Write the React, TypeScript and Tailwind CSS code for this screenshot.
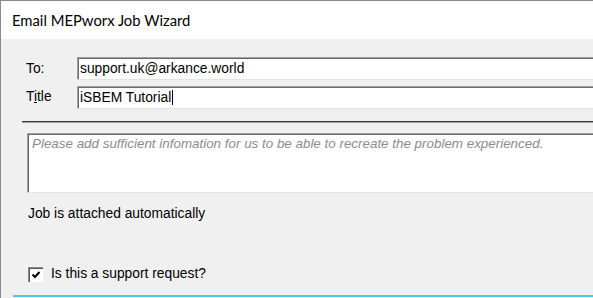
export default function App() {
  return (
    <div className="h-[298px] w-[593px] overflow-hidden bg-[#f0f0f0] font-['Liberation_Sans',Arial,sans-serif] text-[13.8px] text-black">
      <div className="h-full border-l border-t border-[#8a8a8a]">
        {/* title bar */}
        <div className="flex h-[38px] items-center bg-white pl-[11px] font-['Lato','Noto_Sans',sans-serif] text-[14.8px] text-black">
          Email MEPworx Job Wizard
        </div>

        <div className="pt-[18px]">
          <div className="flex flex-col gap-[6px] pl-[25px]">
            <div className="flex h-[23px]">
              <div className="w-[51px] shrink-0 pt-[4px] leading-[15px]">To:</div>
              <SunkenBox className="h-[23px] w-[540px]">
                <span className="pl-[1px] leading-[19px]">support.uk@arkance.world</span>
              </SunkenBox>
            </div>
            <div className="flex h-[23px]">
              <div className="w-[51px] shrink-0 pt-[3px] leading-[15px]">
                T<span className="underline">i</span>tle
              </div>
              <SunkenBox className="h-[23px] w-[540px]">
                <span className="flex items-center pl-[1px] leading-[19px]">
                  iSBEM Tutorial
                  <span className="ml-[1px] inline-block h-[15px] w-[1px] bg-black" />
                </span>
              </SunkenBox>
            </div>
          </div>

          {/* etched separator */}
          <div className="ml-[21px] mt-[12px] h-[2px] border-b border-t border-b-[#a0a0a0] border-t-[#3c3c3c]" />

          <div className="ml-[26px] mt-[10px]">
            <SunkenBox className="h-[60px] w-[580px]">
              <div className="pl-[3px] pt-[1px] text-[13.4px] italic leading-[16px] text-[#8c8c8c]">
                Please add sufficient infomation for us to be able to recreate the problem experienced.
              </div>
            </SunkenBox>
          </div>

          <div className="ml-[27px] mt-[13px] leading-[16px]">Job is attached automatically</div>

          <div className="ml-[27px] mt-[44px] flex h-[16px] items-center gap-[8px]">
            <div className="h-[15px] w-[15px] border-l border-t border-[#8a8a8a] border-b-[#e8e8e8] border-r-[#e8e8e8] bg-white p-0">
              <div className="h-full w-full border-l border-t border-[#5a5a5a]">
                <svg viewBox="0 0 12 12" className="h-[12px] w-[12px]">
                  <path d="M2.5 5.5 L5 8 L9.5 3" fill="none" stroke="black" strokeWidth="2" />
                </svg>
              </div>
            </div>
            <span className="leading-[16px]">Is this a support request?</span>
          </div>

          <div className="ml-[12px] mt-[13px] h-[2px] bg-[#5cc1ec]" />
        </div>
      </div>
    </div>
  );
}

function SunkenBox({ className, children }: { className: string; children: React.ReactNode }) {
  return (
    <div className={`${className} shrink-0 border-l border-t border-b border-[#a0a0a0] border-b-[#e3e3e3] bg-white`}>
      <div className="h-full border-l border-t border-[#696969]">{children}</div>
    </div>
  );
}
